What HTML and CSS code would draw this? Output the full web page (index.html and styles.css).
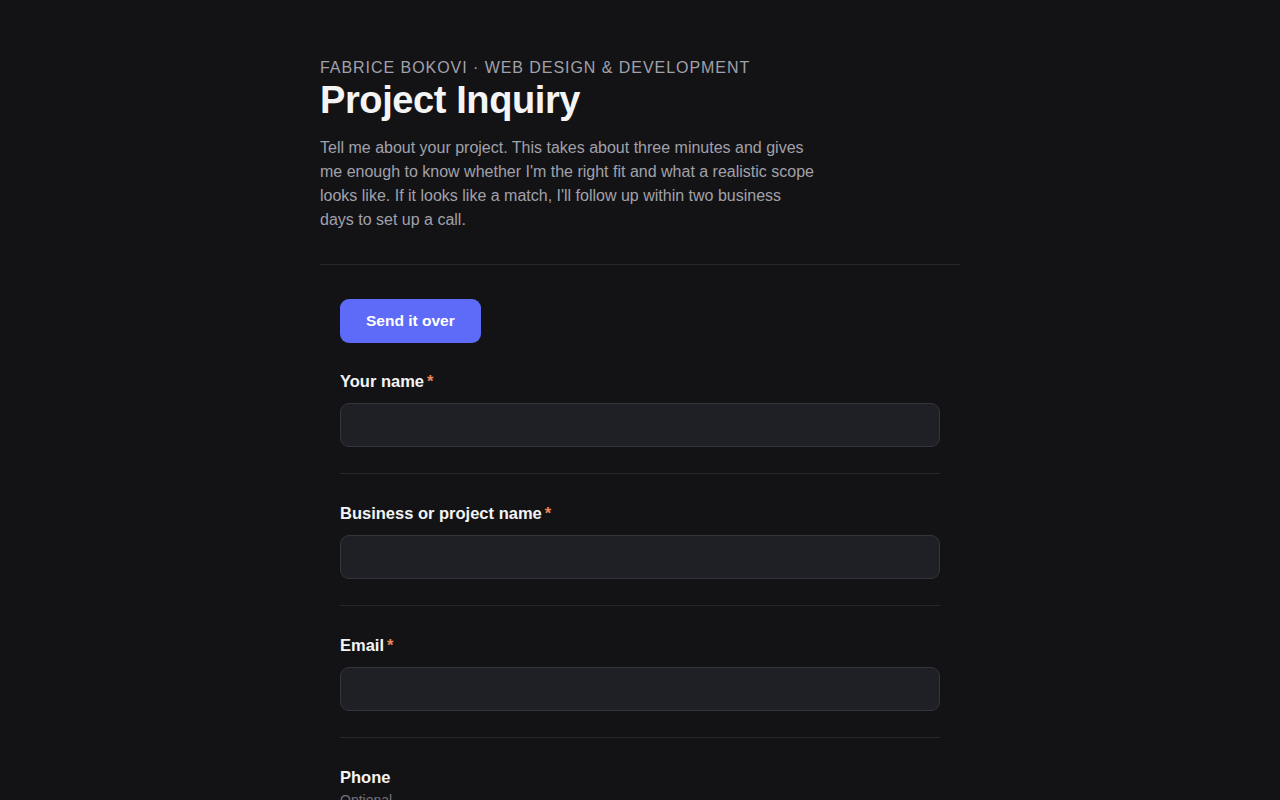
FILE: index.html
```
<!DOCTYPE html>
<html lang="en">
<head>
<meta charset="utf-8">
<title>Project Inquiry</title>
<link rel="stylesheet" href="styles.css">
</head>
<body>
<main class="page">
  <header class="intro">
    <p class="eyebrow">Fabrice Bokovi · Web Design &amp; Development</p>
    <h1 class="title">Project Inquiry</h1>
    <p class="lede">Tell me about your project. This takes about three minutes and gives me enough to know whether I'm the right fit and what a realistic scope looks like. If it looks like a match, I'll follow up within two business days to set up a call.</p>
  </header>
  <form class="form">
    <button type="button" class="submit">Send it over</button>
    <div class="field">
      <label class="label">Your name<span class="req">*</span></label>
      <input class="input" type="text">
    </div>
    <div class="field">
      <label class="label">Business or project name<span class="req">*</span></label>
      <input class="input" type="text">
    </div>
    <div class="field">
      <label class="label">Email<span class="req">*</span></label>
      <input class="input" type="email">
    </div>
    <div class="field">
      <label class="label">Phone</label>
      <p class="hint">Optional</p>
      <input class="input" type="tel">
    </div>
  </form>
</main>
</body>
</html>
```
FILE: styles.css
```
* { box-sizing: border-box; }
html, body { margin: 0; padding: 0; }
body {
  background: #131316;
  color: #f4f4f5;
  font-family: "Liberation Sans", Arial, sans-serif;
}
.page {
  width: 640px;
  margin: 0 auto;
  padding-top: 58px;
}
.intro {
  padding-bottom: 32px;
  border-bottom: 1px solid #26262b;
}
.eyebrow {
  margin: 0;
  font-size: 16px;
  line-height: 20px;
  letter-spacing: 0.95px;
  text-transform: uppercase;
  color: #a1a1aa;
}
.title {
  margin: 0;
  font-size: 38px;
  line-height: 44px;
  font-weight: 700;
  letter-spacing: -0.4px;
  color: #f4f4f5;
}
.lede {
  margin: 14px 0 0;
  max-width: 496px;
  font-size: 16px;
  line-height: 24px;
  color: #a1a1aa;
}
.form {
  padding: 34px 20px 0;
}
.submit {
  display: block;
  height: 44px;
  margin-bottom: -1px;
  padding: 0 26px;
  border: 0;
  border-radius: 9px;
  background: #5e6bf8;
  color: #ffffff;
  font-family: inherit;
  font-size: 15.5px;
  font-weight: 700;
}
.field {
  padding: 29px 0 26px;
  border-bottom: 1px solid #26262b;
}
.label {
  display: block;
  font-size: 16.5px;
  line-height: 20px;
  font-weight: 700;
  color: #f4f4f5;
  margin-bottom: 12px;
}
.req {
  color: #f0845a;
  margin-left: 3px;
}
.hint {
  margin: -9px 0 10px;
  font-size: 14px;
  line-height: 20px;
  color: #71717a;
}
.input {
  display: block;
  width: 100%;
  height: 44px;
  border: 1px solid #34353c;
  border-radius: 9px;
  background: #1f2025;
  color: #f4f4f5;
  font-family: inherit;
  font-size: 16px;
  padding: 0 14px;
}
```
